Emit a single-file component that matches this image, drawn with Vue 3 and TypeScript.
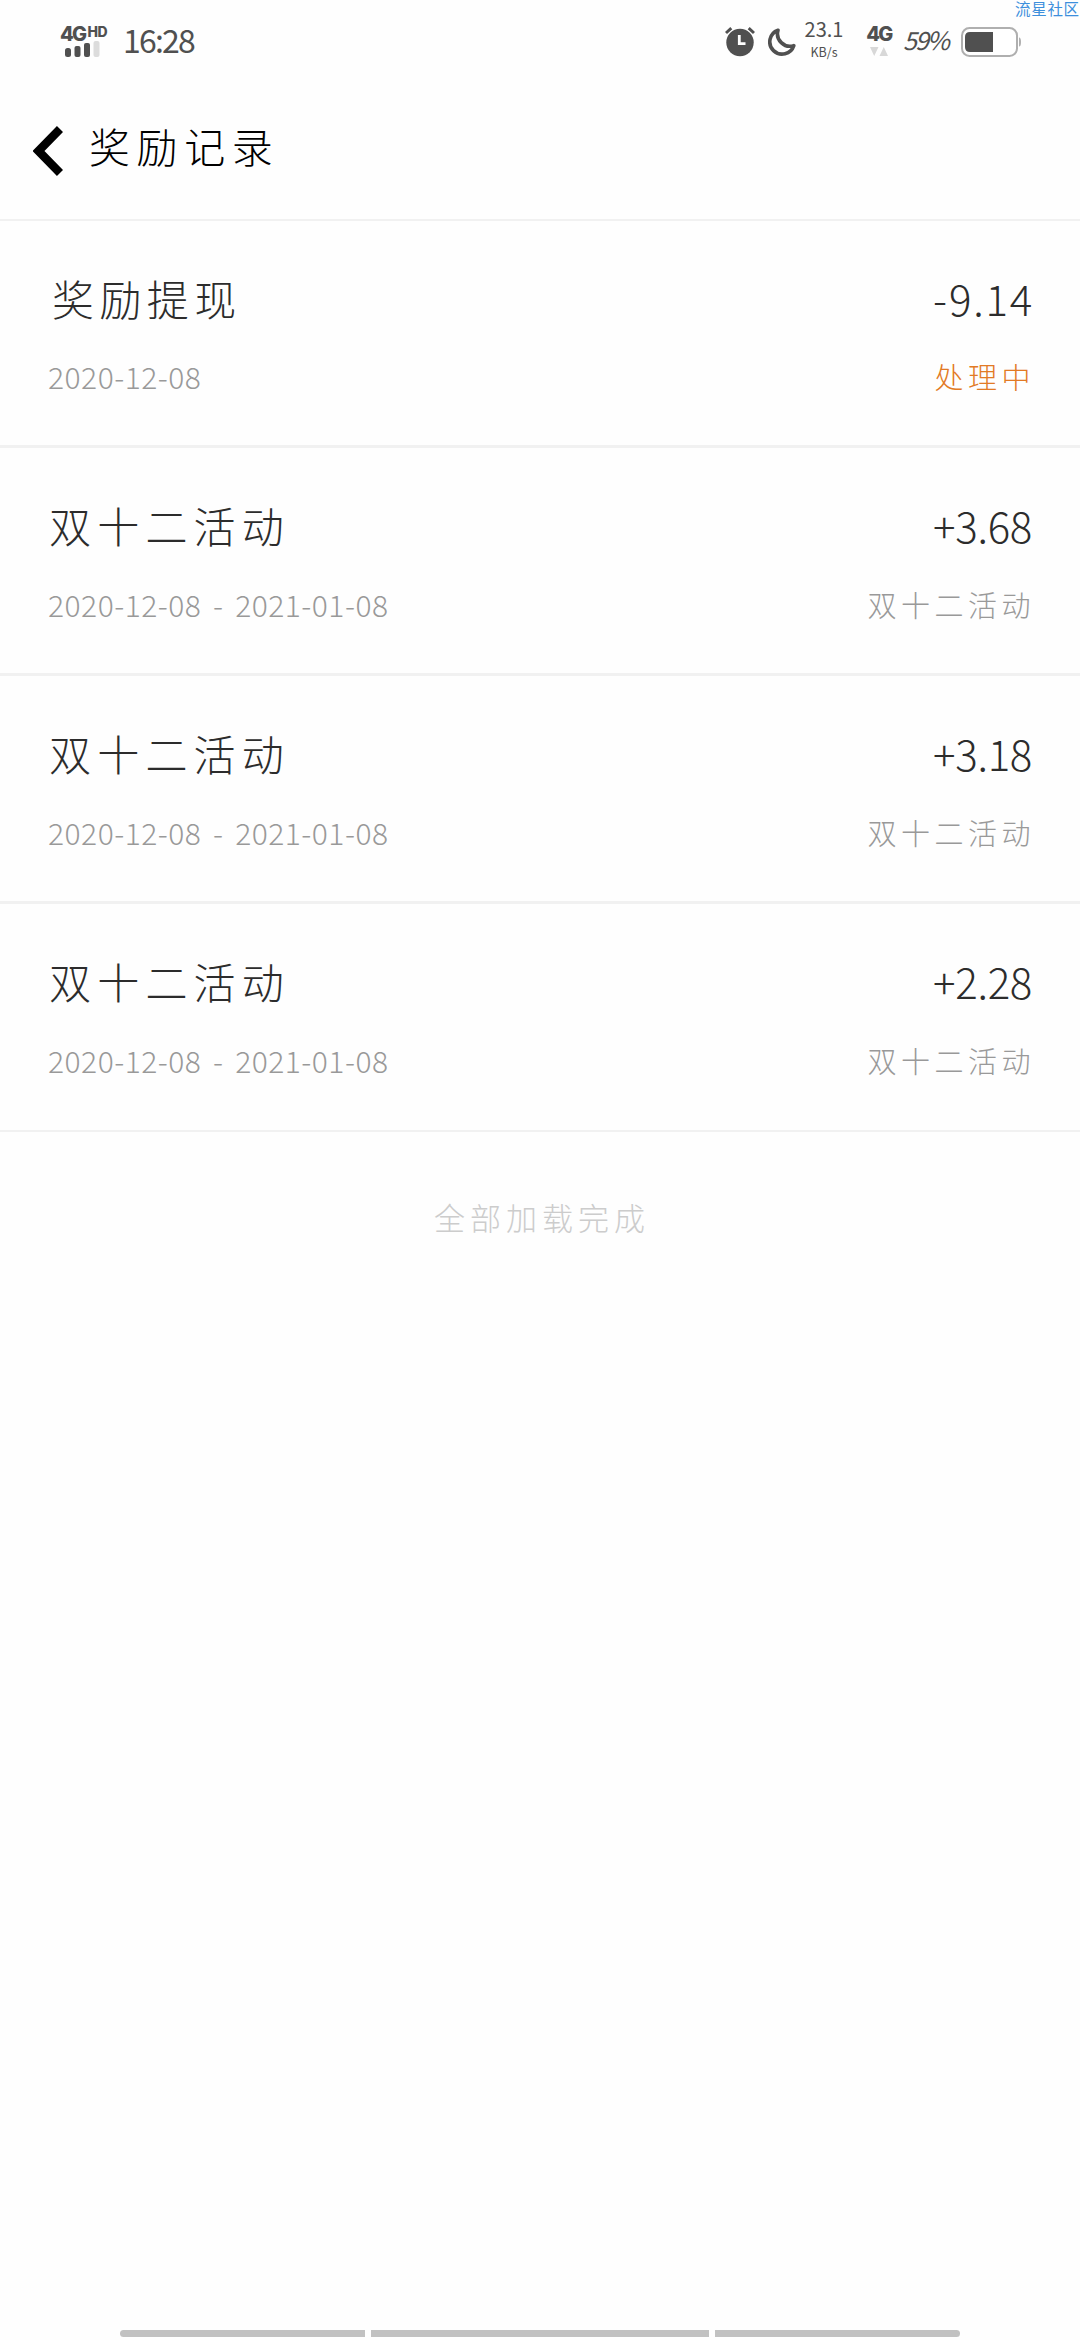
<script setup lang="ts">
interface RewardRecord {
  id: number
  title: string
  amount: string
  period: string
  note: string
  pending?: boolean
}

const records: RewardRecord[] = [
  { id: 1, title: '奖励提现', amount: '-9.14', period: '2020-12-08', note: '处理中', pending: true },
  { id: 2, title: '双十二活动', amount: '+3.68', period: '2020-12-08 - 2021-01-08', note: '双十二活动' },
  { id: 3, title: '双十二活动', amount: '+3.18', period: '2020-12-08 - 2021-01-08', note: '双十二活动' },
  { id: 4, title: '双十二活动', amount: '+2.28', period: '2020-12-08 - 2021-01-08', note: '双十二活动' },
]
</script>

<template>
  <div class="screen">
    <div class="watermark">流星社区</div>

    <div class="status">
      <div class="signal">
        <div class="network"><b>4G</b><b class="hd">HD</b></div>
        <svg class="bars" width="36" height="16" viewBox="0 0 36 16">
          <rect x="0" y="7" width="6" height="9" rx="2.5" fill="#505050" />
          <rect x="9.5" y="5" width="6" height="11" rx="2" fill="#505050" />
          <rect x="19" y="2" width="6" height="14" rx="2" fill="#505050" />
          <rect x="28.5" y="0" width="6" height="16" rx="2" fill="#dcdcdc" />
        </svg>
      </div>
      <span class="time">16:28</span>
      <div class="spacer"></div>
      <svg class="alarm" width="30" height="30" viewBox="0 0 30 30">
        <circle cx="15" cy="15.5" r="13.7" fill="#505050" />
        <path d="M1 6 L6.3 1.2 M23.7 1.2 L29 6" fill="none" stroke="#505050" stroke-width="3" />
        <path d="M14.3 8 V16.7 H20.5" fill="none" stroke="#fff" stroke-width="2.8" />
      </svg>
      <svg class="moon" width="28" height="28" viewBox="0 0 28 28">
        <path d="M10 2.2 A12.3 12.3 0 1 0 25.8 17.6 A12.5 12.5 0 0 1 10 2.2 Z" fill="none" stroke="#505050" stroke-width="3.6" stroke-linejoin="round" />
      </svg>
      <div class="speed">
        <span class="rate">23.1</span>
        <span class="unit">KB/s</span>
      </div>
      <div class="data">
        <b>4G</b>
        <svg width="18" height="9" viewBox="0 0 18 9">
          <path d="M0 0 H8.5 L4.2 9 Z M9.5 9 L13.8 0 L18 9 Z" fill="#d8d8d8" />
        </svg>
      </div>
      <span class="percent">59%</span>
      <svg class="battery" width="60" height="30" viewBox="0 0 60 30">
        <rect x="1" y="1" width="55" height="28" rx="7.5" fill="#fff" stroke="#afafaf" stroke-width="2" />
        <path d="M32 5 H9 Q4 5 4 10 V20 Q4 25 9 25 H32 Z" fill="#505050" />
        <path d="M58 10.5 Q60 10.5 60 15 Q60 19.5 58 19.5 Z" fill="#afafaf" />
      </svg>
    </div>

    <header class="header">
      <svg class="back" width="30" height="50" viewBox="0 0 30 50">
        <path d="M27 3 L5.5 25 L27 47" fill="none" stroke="#000" stroke-width="8.5" />
      </svg>
      <h1>奖励记录</h1>
    </header>

    <main>
      <section v-for="record in records" :key="record.id" class="record" :class="{ withdrawal: record.pending }">
        <div class="line main-line">
          <span class="title">{{ record.title }}</span>
          <span class="amount">{{ record.amount }}</span>
        </div>
        <div class="line sub-line">
          <span class="period">{{ record.period }}</span>
          <span class="note">{{ record.note }}</span>
        </div>
      </section>
      <p class="finished">全部加载完成</p>
    </main>

    <nav class="gestures"><i></i><i></i><i></i></nav>
  </div>
</template>

<style>
body {
  background: #fefefe;
}
</style>

<style scoped>
.screen {
  position: relative;
  display: flex;
  flex-direction: column;
  width: 1080px;
  height: 2340px;
  overflow: hidden;
  background: #fefefe;
  color: #2c2c2c;
  font-family: "Noto Sans CJK SC", sans-serif;
  font-weight: 300;
  white-space: nowrap;
}
.watermark {
  position: absolute;
  top: 0;
  left: 1015px;
  font-size: 15.5px;
  font-weight: 400;
  line-height: 17px;
  letter-spacing: 0.7px;
  color: #3d8fdc;
}
.status {
  display: flex;
  align-items: flex-start;
  box-sizing: border-box;
  height: 80px;
  padding: 0 59px 0 60px;
  color: #505050;
}
.status b {
  font-family: Inter, sans-serif;
  font-size: 20px;
  font-weight: 800;
  line-height: 15px;
  letter-spacing: -1.7px;
}
.signal {
  width: 48px;
  padding-top: 27px;
}
.network {
  display: flex;
  height: 14px;
}
.status .hd {
  margin-left: 2px;
  font-size: 14px;
  line-height: 10px;
  letter-spacing: -0.5px;
}
.bars {
  display: block;
  margin-left: 5px;
}
.time {
  margin: 19px 0 0 15px;
  font-size: 32px;
  font-weight: 400;
  line-height: 40px;
  letter-spacing: -1.8px;
}
.spacer {
  flex: 1;
}
.alarm {
  margin-top: 27px;
}
.moon {
  margin: 28px 0 0 13px;
}
.speed {
  display: flex;
  flex-direction: column;
  align-items: center;
  width: 38px;
  margin: 17px 0 0 9px;
}
.rate {
  font-size: 20px;
  font-weight: 400;
  line-height: 24px;
}
.unit {
  margin-top: 4px;
  font-size: 12.5px;
  font-weight: 400;
  line-height: 14px;
}
.data {
  display: flex;
  flex-direction: column;
  align-items: center;
  gap: 5px;
  width: 26px;
  margin: 27px 0 0 23px;
}
.percent {
  width: 46px;
  margin: 20px 0 0 11px;
  font-size: 25px;
  font-style: italic;
  font-weight: 400;
  line-height: 38px;
  letter-spacing: -2px;
}
.battery {
  margin: 27px 0 0 12px;
}
.header {
  display: flex;
  box-sizing: border-box;
  height: 141px;
  padding-left: 33px;
  border-bottom: 2px solid #f1f1f1;
}
.back {
  margin-top: 46px;
}
h1 {
  margin: 35px 0 0 26px;
  font-size: 41px;
  font-weight: 300;
  line-height: 60px;
  letter-spacing: 6.6px;
  color: #000;
}
main {
  flex: 1;
}
.record {
  box-sizing: border-box;
  height: 228px;
  padding: 47px 48px 0;
  border-bottom: 3px solid #f1f1f1;
}
.record:first-of-type {
  height: 227px;
}
.record:last-of-type {
  border-bottom-width: 2px;
}
.line {
  display: flex;
  justify-content: space-between;
}
.main-line {
  height: 60px;
  font-size: 42px;
  line-height: 60px;
}
.title {
  margin-left: 1px;
  letter-spacing: 6.2px;
}
.withdrawal .title {
  margin-left: 4px;
  letter-spacing: 5.4px;
}
.amount {
  letter-spacing: -0.3px;
}
.withdrawal .amount {
  margin-right: -2px;
  letter-spacing: 1.8px;
}
.sub-line {
  height: 44px;
  margin-top: 26px;
  font-size: 30px;
  line-height: 44px;
  color: #999;
}
.period {
  letter-spacing: 0.5px;
  word-spacing: 4.5px;
}
.record:not(.withdrawal) .sub-line {
  margin-top: 27px;
}
.note {
  margin-right: -3px;
  font-size: 29px;
  letter-spacing: 4.5px;
}
.withdrawal .note {
  color: #e27a25;
}
.finished {
  margin: 61px 0 0 4px;
  font-size: 31px;
  line-height: 48px;
  letter-spacing: 5px;
  text-align: center;
  color: #ccc;
}
.gestures {
  display: flex;
  justify-content: center;
  gap: 6px;
  height: 10px;
}
.gestures i {
  width: 245px;
  height: 7px;
  background: #c1c1c1;
}
.gestures i:nth-child(2) {
  width: 338px;
}
.gestures i:first-child {
  border-radius: 4px 0 0 4px;
}
.gestures i:last-child {
  border-radius: 0 4px 4px 0;
}
</style>
